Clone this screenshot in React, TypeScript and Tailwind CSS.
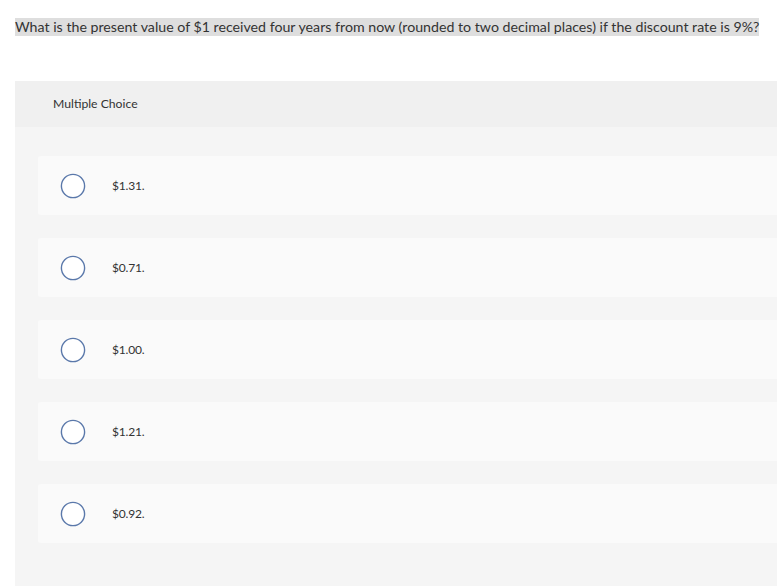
const choices = ['$1.31.', '$0.71.', '$1.00.', '$1.21.', '$0.92.']

function RadioCircle() {
  return (
    <svg width="26" height="26" viewBox="0 0 26 26" className="shrink-0">
      <circle cx="13" cy="13" r="11.6" fill="#ffffff" stroke="#5a78aa" strokeWidth="1.4" />
    </svg>
  )
}

export default function App() {
  return (
    <div className="min-h-[586px] bg-white text-[#333333]" style={{ fontFamily: 'Lato, "Open Sans", sans-serif' }}>
      <div className="pl-[15px] pt-[18px]">
        <div className="w-fit bg-[#dedede] text-[14.2px] leading-[18px]">
          What is the present value of $1 received four years from now (rounded to two decimal places) if the discount rate is 9%?
        </div>
      </div>
      <div className="ml-[15px] mt-[45px] bg-[#f5f5f5] pb-[43px]">
        <div className="flex h-[46px] items-center bg-[#f0f0f0] pl-[38px] text-[12.2px]">Multiple Choice</div>
        <div className="flex flex-col gap-[23px] pl-[23px] pt-[29px]">
          {choices.map((c) => (
            <div key={c} className="flex h-[59px] items-center rounded-l-[3px] bg-[#fafafa] pl-[22px]">
              <RadioCircle />
              <span className="ml-[26px] text-[12px] tracking-[-0.2px]">{c}</span>
            </div>
          ))}
        </div>
      </div>
    </div>
  )
}
